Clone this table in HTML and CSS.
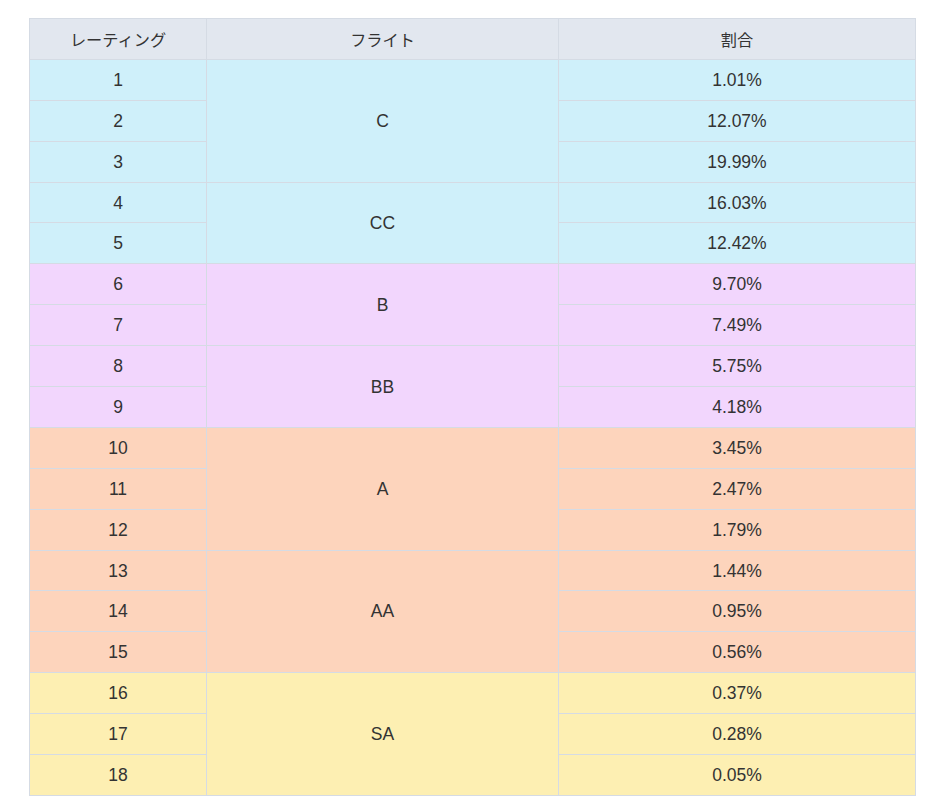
FILE: index.html
```html
<!DOCTYPE html>
<html lang="ja">
<head>
<meta charset="utf-8">
<link rel="stylesheet" href="styles.css">
</head>
<body>
<div class="wrap">
<table class="tbl">
<thead>
<tr><th class="c1">レーティング</th><th class="c2">フライト</th><th class="c3">割合</th></tr>
</thead>
<tbody>
<tr class="cy"><td>1</td><td rowspan="3">C</td><td>1.01%</td></tr>
<tr class="cy"><td>2</td><td>12.07%</td></tr>
<tr class="cy"><td>3</td><td>19.99%</td></tr>
<tr class="cy"><td>4</td><td rowspan="2">CC</td><td>16.03%</td></tr>
<tr class="cy"><td>5</td><td>12.42%</td></tr>
<tr class="pu"><td>6</td><td rowspan="2">B</td><td>9.70%</td></tr>
<tr class="pu"><td>7</td><td>7.49%</td></tr>
<tr class="pu"><td>8</td><td rowspan="2">BB</td><td>5.75%</td></tr>
<tr class="pu"><td>9</td><td>4.18%</td></tr>
<tr class="or"><td>10</td><td rowspan="3">A</td><td>3.45%</td></tr>
<tr class="or"><td>11</td><td>2.47%</td></tr>
<tr class="or"><td>12</td><td>1.79%</td></tr>
<tr class="or"><td>13</td><td rowspan="3">AA</td><td>1.44%</td></tr>
<tr class="or"><td>14</td><td>0.95%</td></tr>
<tr class="or"><td>15</td><td>0.56%</td></tr>
<tr class="ye"><td>16</td><td rowspan="3">SA</td><td>0.37%</td></tr>
<tr class="ye"><td>17</td><td>0.28%</td></tr>
<tr class="ye"><td>18</td><td>0.05%</td></tr>
</tbody>
</table>
</div>
</body>
</html>
```
FILE: styles.css
```css
html, body {
  margin: 0;
  padding: 0;
  background: #ffffff;
}
body {
  font-family: "Liberation Sans", Arial, "Noto Sans CJK JP", sans-serif;
  font-size: 17.5px;
  color: #333333;
}
.wrap {
  padding: 18px 30px 0 29px;
}
.tbl {
  width: 886px;
  border-collapse: collapse;
  table-layout: fixed;
}
.tbl th, .tbl td {
  border: 1px solid #d5dbe4;
  text-align: center;
  vertical-align: middle;
  padding: 0;
  font-weight: normal;
  line-height: 20px;
}
.tbl tr {
  height: 40.9px;
}
.tbl th {
  background: #e2e7ef;
  font-family: "Noto Sans CJK JP", "Liberation Sans", sans-serif;
  font-size: 16.2px;
}
.c1 { width: 176px; }
.c2 { width: 351px; }
.c3 { width: 356px; }
.cy td { background: #cff0fa; }
.pu td { background: #f2d6fd; }
.or td { background: #fdd4bc; }
.ye td { background: #fdefb2; }
```
